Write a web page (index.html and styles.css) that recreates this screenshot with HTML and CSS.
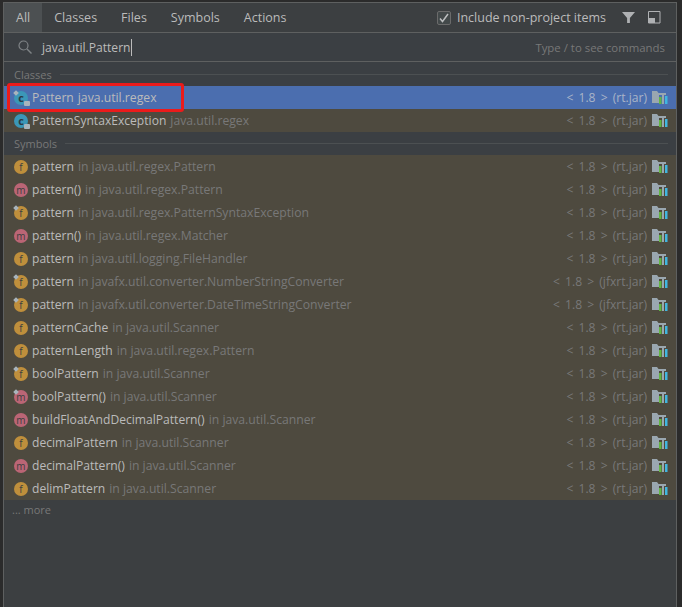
FILE: index.html
```html
<!DOCTYPE html>
<html lang="en">
<head>
<meta charset="utf-8">
<title>Search Everywhere</title>
<link rel="stylesheet" href="styles.css">
</head>
<body>
<svg class="defs" width="0" height="0" aria-hidden="true">
  <symbol id="jar" viewBox="0 0 16 13">
    <path d="M0 0h5l1.500 2H14v2H7v8H0z" fill="#9aa7b0"/>
    <rect x="7" y="6" width="2.500" height="7" fill="#62b543"/>
    <rect x="10" y="3" width="2" height="10" fill="#9aa7b0"/>
    <rect x="13" y="5" width="2.500" height="8" fill="#40b6e0"/>
  </symbol>
</svg>
<main class="popup">
  <header class="tabs">
    <nav class="tablist">
      <span class="tab tab-active">All</span>
      <span class="tab">Classes</span>
      <span class="tab">Files</span>
      <span class="tab">Symbols</span>
      <span class="tab">Actions</span>
    </nav>
    <div class="tools">
      <span class="check"><svg viewBox="0 0 14 14" width="14" height="14"><path d="M3 7.500 5.500 10.500 11 3" fill="none" stroke="#bdbfc0" stroke-width="1.500"/></svg></span>
      <span class="include">Include non-project items</span>
      <svg class="filter" viewBox="0 0 14 14" width="13" height="13"><path d="M0 1h14L8.500 7.500V13h-3V7.500z" fill="#afb1b3"/></svg>
      <svg class="dock" viewBox="0 0 13 13" width="13" height="13"><path d="M.500.500h11.500v11.500H.500z" fill="none" stroke="#afb1b3"/><path d="M1 7h6v5H1z" fill="#afb1b3"/></svg>
    </div>
  </header>
  <div class="search">
    <svg class="glass" viewBox="0 0 14 14" width="14" height="14"><circle cx="5.500" cy="5.500" r="4.500" fill="none" stroke="#7f8386" stroke-width="1.200"/><path d="m9 9 4.500 4.500" stroke="#7f8386" stroke-width="1.400"/></svg>
    <span class="query">java.util.Pattern</span><span class="caret"></span>
    <span class="hint">Type / to see commands</span>
  </div>
  <div class="group"><span>Classes</span><i></i></div>
  <div class="row selected">
    <span class="icon c pinned">c<b class="lock"></b></span><span class="name">Pattern</span><span class="loc sel-loc">java.util.regex</span>
    <span class="ver">&lt; 1.8 &gt; (rt.jar)</span><svg class="jar"><use href="#jar"/></svg>
  </div>
  <div class="row">
    <span class="icon c">c<b class="lock"></b></span><span class="name">PatternSyntaxException</span><span class="loc">java.util.regex</span>
    <span class="ver">&lt; 1.8 &gt; (rt.jar)</span><svg class="jar"><use href="#jar"/></svg>
  </div>
  <div class="group"><span>Symbols</span><i></i></div>
  <div class="row"><span class="icon f">f</span><span class="name">pattern</span><span class="loc">in java.util.regex.Pattern</span><span class="ver">&lt; 1.8 &gt; (rt.jar)</span><svg class="jar"><use href="#jar"/></svg></div>
  <div class="row"><span class="icon m">m</span><span class="name">pattern()</span><span class="loc">in java.util.regex.Pattern</span><span class="ver">&lt; 1.8 &gt; (rt.jar)</span><svg class="jar"><use href="#jar"/></svg></div>
  <div class="row"><span class="icon f pinned">f</span><span class="name">pattern</span><span class="loc">in java.util.regex.PatternSyntaxException</span><span class="ver">&lt; 1.8 &gt; (rt.jar)</span><svg class="jar"><use href="#jar"/></svg></div>
  <div class="row"><span class="icon m">m</span><span class="name">pattern()</span><span class="loc">in java.util.regex.Matcher</span><span class="ver">&lt; 1.8 &gt; (rt.jar)</span><svg class="jar"><use href="#jar"/></svg></div>
  <div class="row"><span class="icon f">f</span><span class="name">pattern</span><span class="loc">in java.util.logging.FileHandler</span><span class="ver">&lt; 1.8 &gt; (rt.jar)</span><svg class="jar"><use href="#jar"/></svg></div>
  <div class="row"><span class="icon f pinned">f</span><span class="name">pattern</span><span class="loc">in javafx.util.converter.NumberStringConverter</span><span class="ver">&lt; 1.8 &gt; (jfxrt.jar)</span><svg class="jar"><use href="#jar"/></svg></div>
  <div class="row"><span class="icon f pinned">f</span><span class="name">pattern</span><span class="loc">in javafx.util.converter.DateTimeStringConverter</span><span class="ver">&lt; 1.8 &gt; (jfxrt.jar)</span><svg class="jar"><use href="#jar"/></svg></div>
  <div class="row"><span class="icon f">f</span><span class="name">patternCache</span><span class="loc">in java.util.Scanner</span><span class="ver">&lt; 1.8 &gt; (rt.jar)</span><svg class="jar"><use href="#jar"/></svg></div>
  <div class="row"><span class="icon f">f</span><span class="name">patternLength</span><span class="loc">in java.util.regex.Pattern</span><span class="ver">&lt; 1.8 &gt; (rt.jar)</span><svg class="jar"><use href="#jar"/></svg></div>
  <div class="row"><span class="icon f pinned">f</span><span class="name">boolPattern</span><span class="loc">in java.util.Scanner</span><span class="ver">&lt; 1.8 &gt; (rt.jar)</span><svg class="jar"><use href="#jar"/></svg></div>
  <div class="row"><span class="icon m pinned">m</span><span class="name">boolPattern()</span><span class="loc">in java.util.Scanner</span><span class="ver">&lt; 1.8 &gt; (rt.jar)</span><svg class="jar"><use href="#jar"/></svg></div>
  <div class="row"><span class="icon m">m</span><span class="name">buildFloatAndDecimalPattern()</span><span class="loc">in java.util.Scanner</span><span class="ver">&lt; 1.8 &gt; (rt.jar)</span><svg class="jar"><use href="#jar"/></svg></div>
  <div class="row"><span class="icon f">f</span><span class="name">decimalPattern</span><span class="loc">in java.util.Scanner</span><span class="ver">&lt; 1.8 &gt; (rt.jar)</span><svg class="jar"><use href="#jar"/></svg></div>
  <div class="row"><span class="icon m">m</span><span class="name">decimalPattern()</span><span class="loc">in java.util.Scanner</span><span class="ver">&lt; 1.8 &gt; (rt.jar)</span><svg class="jar"><use href="#jar"/></svg></div>
  <div class="row"><span class="icon f">f</span><span class="name">delimPattern</span><span class="loc">in java.util.Scanner</span><span class="ver">&lt; 1.8 &gt; (rt.jar)</span><svg class="jar"><use href="#jar"/></svg></div>
  <div class="more">... more</div>
  <div class="marker"></div>
</main>
</body>
</html>
```
FILE: styles.css
```css
* { box-sizing: border-box; }
html, body { margin: 0; height: 100%; }
body {
  background: #2b2b2b;
  overflow: hidden;
  padding: 2px 5px 0 3px;
  font-family: "Open Sans", sans-serif;
  font-size: 12.1px;
  color: #bbbbbb;
}
.defs { position: absolute; }
.popup {
  position: relative;
  height: 605px;
  background: #3c3f41;
  border: 1px solid #5e6060;
  border-bottom: 0;
}
.tabs {
  display: flex;
  justify-content: space-between;
  height: 30px;
  background: #3c3f41;
  font-size: 12.5px;
  border-bottom: 1px solid #5e6060;
}
.tablist { display: flex; }
.tab {
  display: flex;
  align-items: center;
  padding: 0 12px;
}
.tab-active { background: #4c5052; }
.tools { display: flex; align-items: center; }
.check {
  display: flex;
  width: 14px;
  height: 14px;
  margin-right: 6px;
  border: 1px solid #6b6b6b;
  border-radius: 2px;
  background: #43494a;
}
.check svg { margin: -1px; }
.include { margin-right: 16px; }
.filter { margin-right: 13px; }
.dock { margin-right: 15px; }
.search {
  display: flex;
  align-items: center;
  height: 29px;
  padding: 0 11px 0 14px;
  background: #3b3f43;
  border-bottom: 1px solid #5e6060;
}
.glass { margin-right: 10px; }
.caret { width: 1px; height: 17px; background: #bbbbbb; }
.hint { margin-left: auto; color: #787878; font-size: 11.4px; }
.group {
  display: flex;
  align-items: center;
  gap: 8px;
  height: 24px;
  padding: 0 8px 0 10px;
  color: #787878;
  font-size: 11px;
  background: #3b3f43;
}
.group i { flex: 1; height: 1px; background: #4c5052; }
.row {
  display: flex;
  align-items: center;
  height: 23px;
  padding: 0 8px 0 10px;
  background: #4e4a3f;
}
.row + .group { height: 23px; }
.icon {
  position: relative;
  flex: none;
  display: flex;
  align-items: center;
  justify-content: center;
  width: 14px;
  height: 14px;
  margin-right: 4px;
  border-radius: 50%;
  color: #3c3f41;
  font-size: 10px;
  line-height: 1;
}
.f { background: #bf8f3c; }
.m { background: #bb6575; }
.c { background: #3b97b8; color: #2b3a42; font-weight: 700; font-size: 11px; }
.pinned::before {
  content: "";
  position: absolute;
  left: 0;
  top: 0;
  width: 4px;
  height: 4px;
  background: #a9b4bc;
  transform: rotate(45deg);
}
.lock {
  position: absolute;
  right: -2px;
  bottom: -1px;
  width: 6px;
  height: 5px;
  background: #a9b4bc;
  border-radius: 1px;
}
.name { margin-right: 4px; white-space: nowrap; }
.loc { color: #787878; font-size: 12.2px; white-space: nowrap; }
.ver { margin-left: auto; color: #787878; word-spacing: 2px; white-space: nowrap; }
.jar { width: 16px; height: 13px; margin-left: 5px; flex: none; }
.selected { background: #4b6eaf; }
.sel-loc { color: #bbbbbb; }
.selected .ver { color: #a9b4c8; }
.more { padding: 2px 8px; color: #787878; font-size: 11px; }
.marker {
  position: absolute;
  left: 3px;
  top: 80px;
  width: 177px;
  height: 29px;
  border: 3px solid #eb1b1b;
  border-radius: 3px;
}
```
